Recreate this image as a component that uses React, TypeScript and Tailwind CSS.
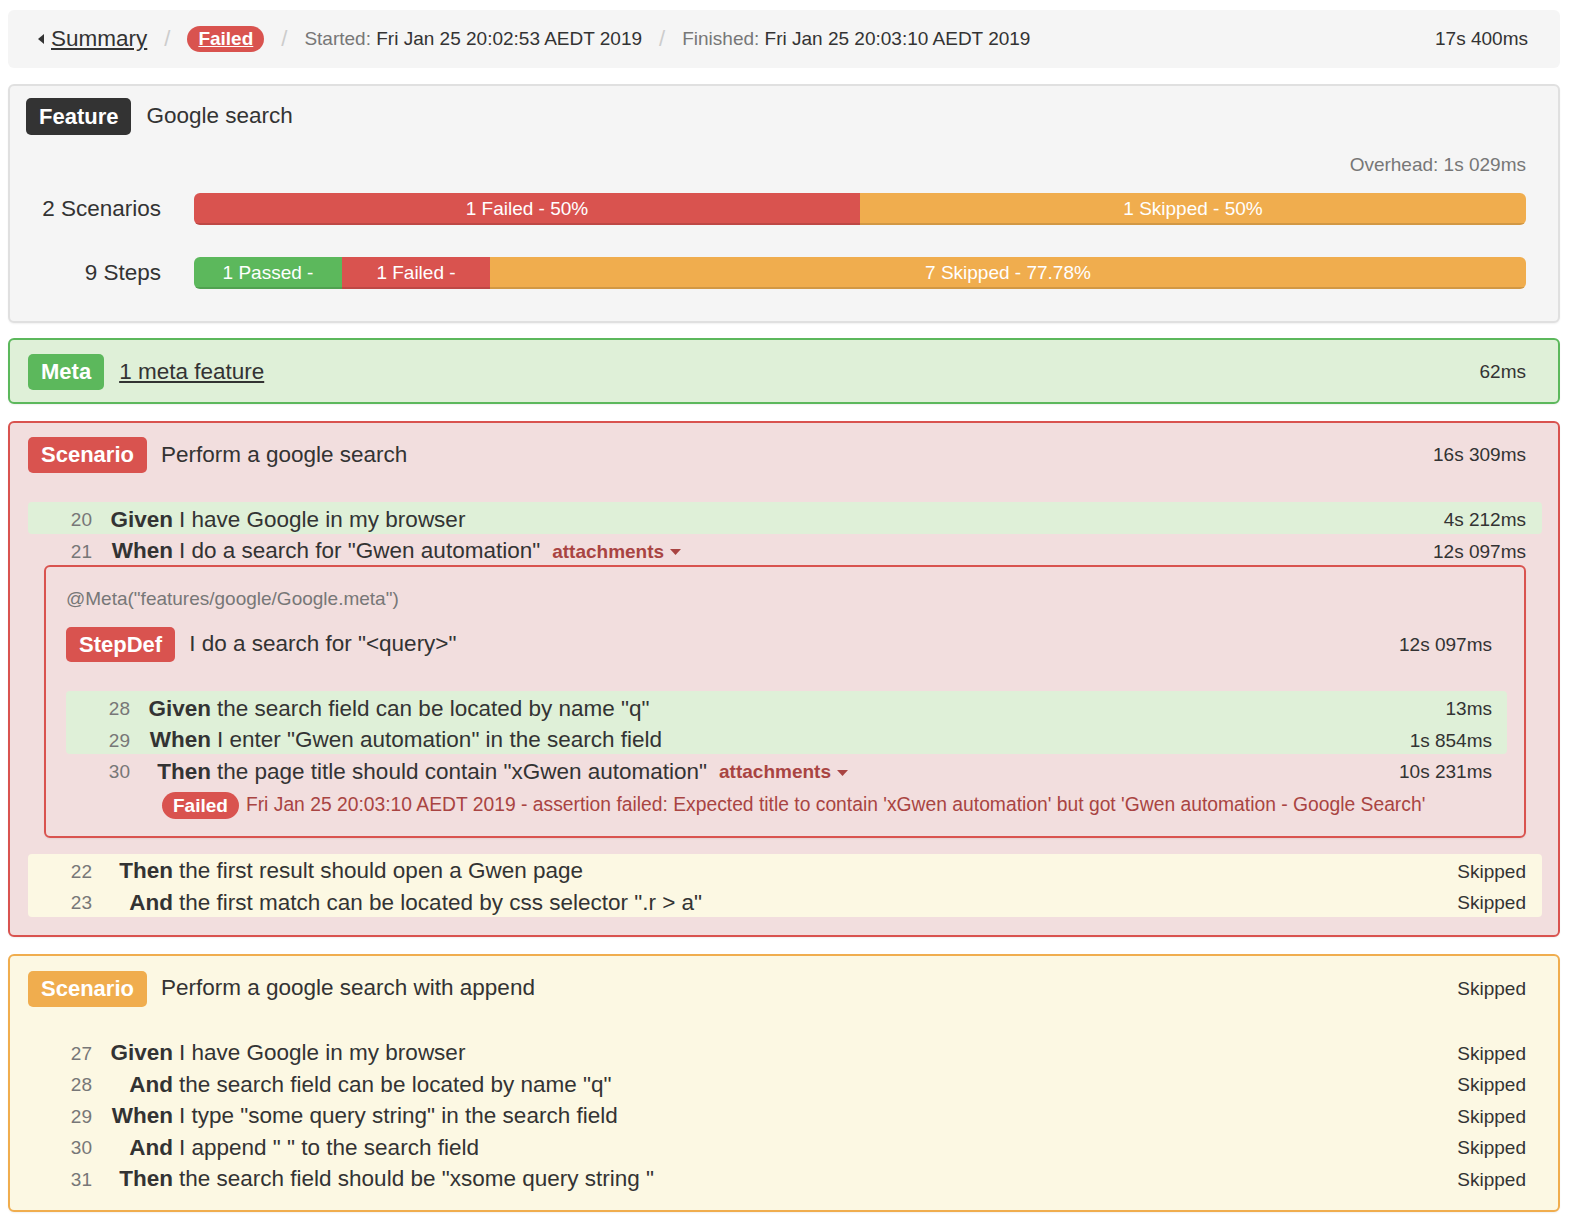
import React from "react";

function Caret({ className }: { className?: string }) {
  return (
    <svg width="11" height="6" viewBox="0 0 11 6" className={className}>
      <path d="M0 0h11L5.5 6z" fill="currentColor" />
    </svg>
  );
}

function Attachments() {
  return (
    <span className="ml-[12px] inline-flex items-center text-[19px] font-bold text-[#a94442]">
      attachments
      <Caret className="ml-[6px] mt-[2px]" />
    </span>
  );
}

type StepProps = { num: number; kw: string; text: string; dur: string; attach?: boolean };

function Step({ num, kw, text, dur, attach }: StepProps) {
  return (
    <div className="flex h-[31.5px] items-center pr-[16px] pt-[4px]">
      <span className="w-[64px] shrink-0 text-right text-[19px] text-[#777]">{num}</span>
      <span className="ml-[18px] w-[63px] shrink-0 text-right font-bold">{kw}</span>
      <span className="ml-[6px] whitespace-pre">{text}</span>
      {attach && <Attachments />}
      <span className="ml-auto text-[19px]">{dur}</span>
    </div>
  );
}

function Label({ children, className }: { children: React.ReactNode; className: string }) {
  return (
    <span className={`inline-flex shrink-0 items-center rounded-[5px] px-[13px] text-[22px] font-bold text-white ${className}`}>
      {children}
    </span>
  );
}

function Sep() {
  return <span className="mx-[17px] text-[22px] text-[#ccc]">/</span>;
}

export default function App() {
  return (
    <div className="bg-white pb-[12px] pl-[8px] pr-[12px] pt-[10px] text-[22.5px] leading-[1.42857] text-[#333] [font-family:'Liberation_Sans',Arial,Helvetica,sans-serif]">
      {/* Breadcrumb */}
      <div className="flex h-[58px] items-center rounded-[6px] bg-[#f5f5f5] pl-[30px] pr-[32px]">
        <svg width="6" height="10" viewBox="0 0 6 10" className="text-[#333]">
          <path d="M6 0v10L0 5z" fill="currentColor" />
        </svg>
        <a className="ml-[7px] text-[22.5px] underline">Summary</a>
        <Sep />
        <span className="h-[26px] rounded-full bg-[#d9534f] px-[11px] text-[19px] font-bold leading-[26px] text-white underline">
          Failed
        </span>
        <Sep />
        <span className="text-[19px]">
          <span className="text-[#777]">Started:</span> Fri Jan 25 20:02:53 AEDT 2019
        </span>
        <Sep />
        <span className="text-[19px]">
          <span className="text-[#777]">Finished:</span> Fri Jan 25 20:03:10 AEDT 2019
        </span>
        <span className="ml-auto text-[19px]">17s 400ms</span>
      </div>

      {/* Feature */}
      <div className="mt-[16px] rounded-[6px] border-2 border-[#e0e0e0] bg-[#f5f5f5] px-[16px] pb-[32px] pt-[12px] shadow-[0_1px_2px_rgba(0,0,0,0.06)]">
        <div className="flex items-center">
          <Label className="h-[37px] bg-[#333] px-[12px]">Feature</Label>
          <span className="ml-[15px]">Google search</span>
        </div>
        <div className="mt-[17px] pr-[16px] text-right text-[19px] leading-[26px] text-[#777]">Overhead: 1s 029ms</div>
        <div className="mt-[15px] flex items-center pr-[16px]">
          <span className="w-[135px] shrink-0 text-right leading-[32px]">2 Scenarios</span>
          <div className="ml-[33px] flex h-[32px] flex-1 overflow-hidden rounded-[6px] text-[19px] leading-[32px] text-white">
            <div className="w-1/2 bg-[#d9534f] text-center shadow-[inset_0_-2px_0_rgba(0,0,0,0.12)]">1 Failed - 50%</div>
            <div className="w-1/2 bg-[#f0ad4e] text-center shadow-[inset_0_-2px_0_rgba(0,0,0,0.12)]">1 Skipped - 50%</div>
          </div>
        </div>
        <div className="mt-[32px] flex items-center pr-[16px]">
          <span className="w-[135px] shrink-0 text-right leading-[32px]">9 Steps</span>
          <div className="ml-[33px] flex h-[32px] flex-1 overflow-hidden rounded-[6px] text-[19px] leading-[32px] text-white">
            <div className="w-[11.11%] overflow-hidden whitespace-nowrap bg-[#5cb85c] text-center shadow-[inset_0_-2px_0_rgba(0,0,0,0.12)]">1 Passed -</div>
            <div className="w-[11.11%] overflow-hidden whitespace-nowrap bg-[#d9534f] text-center shadow-[inset_0_-2px_0_rgba(0,0,0,0.12)]">1 Failed -</div>
            <div className="w-[77.78%] bg-[#f0ad4e] text-center shadow-[inset_0_-2px_0_rgba(0,0,0,0.12)]">7 Skipped - 77.78%</div>
          </div>
        </div>
      </div>

      {/* Meta */}
      <div className="mt-[15px] flex items-center rounded-[6px] border-2 border-[#5cb85c] bg-[#dff0d8] pb-[12px] pl-[18px] pr-[32px] pt-[14px] shadow-[0_1px_2px_rgba(0,0,0,0.06)]">
        <Label className="h-[36px] bg-[#5cb85c] px-[13px]">Meta</Label>
        <a className="ml-[15px] underline">1 meta feature</a>
        <span className="ml-auto text-[19px]">62ms</span>
      </div>

      {/* Scenario failed */}
      <div className="mt-[17px] rounded-[6px] border-2 border-[#d9534f] bg-[#f2dede] pb-[18px] pl-[18px] pr-[16px] pt-[14px] shadow-[0_1px_2px_rgba(0,0,0,0.06)]">
        <div className="flex items-center pr-[16px]">
          <Label className="h-[36px] bg-[#d9534f]">Scenario</Label>
          <span className="ml-[14px]">Perform a google search</span>
          <span className="ml-auto text-[19px]">16s 309ms</span>
        </div>
        <div className="mt-[29px] rounded-[4px] bg-[#dff0d8]">
          <Step num={20} kw="Given" text="I have Google in my browser" dur="4s 212ms" />
        </div>
        <Step num={21} kw="When" text={'I do a search for "Gwen automation"'} dur="12s 097ms" attach />
        <div className="mx-[16px] rounded-[6px] border-2 border-[#d9534f] pb-[17px] pl-[20px] pr-[17px] pt-[18px] shadow-[0_1px_2px_rgba(0,0,0,0.06)]">
          <div className="text-[19px] leading-[27px] text-[#777]">@Meta("features/google/Google.meta")</div>
          <div className="mt-[15px] flex items-center pr-[15px]">
            <Label className="h-[35px] bg-[#d9534f]">StepDef</Label>
            <span className="ml-[14px]">I do a search for "&lt;query&gt;"</span>
            <span className="ml-auto text-[19px]">12s 097ms</span>
          </div>
          <div className="mt-[29px] rounded-[4px] bg-[#dff0d8]">
            <div className="[&>div]:pr-[15px]">
              <Step num={28} kw="Given" text={'the search field can be located by name "q"'} dur="13ms" />
              <Step num={29} kw="When" text={'I enter "Gwen automation" in the search field'} dur="1s 854ms" />
            </div>
          </div>
          <div className="[&>div]:pr-[15px]">
            <Step num={30} kw="Then" text={'the page title should contain "xGwen automation"'} dur="10s 231ms" attach />
          </div>
          <div className="mt-[6px] flex h-[27px] items-center pl-[96px]">
            <span className="h-[27px] rounded-full bg-[#d9534f] px-[11px] text-[19px] font-bold leading-[27px] text-white">Failed</span>
            <span className="ml-[7px] text-[19.3px] text-[#a94442]">
              Fri Jan 25 20:03:10 AEDT 2019 - assertion failed: Expected title to contain 'xGwen automation' but got 'Gwen automation - Google Search'
            </span>
          </div>
        </div>
        <div className="mt-[16px] rounded-[4px] bg-[#fcf8e3]">
          <Step num={22} kw="Then" text="the first result should open a Gwen page" dur="Skipped" />
          <Step num={23} kw="And" text={'the first match can be located by css selector ".r > a"'} dur="Skipped" />
        </div>
      </div>

      {/* Scenario skipped */}
      <div className="mt-[17px] rounded-[6px] border-2 border-[#f0ad4e] bg-[#fcf8e3] pb-[17px] pl-[18px] pr-[16px] pt-[15px] shadow-[0_1px_2px_rgba(0,0,0,0.06)]">
        <div className="flex items-center pr-[16px]">
          <Label className="h-[36px] bg-[#f0ad4e]">Scenario</Label>
          <span className="ml-[14px]">Perform a google search with append</span>
          <span className="ml-auto text-[19px]">Skipped</span>
        </div>
        <div className="mt-[29px]">
          <Step num={27} kw="Given" text="I have Google in my browser" dur="Skipped" />
          <Step num={28} kw="And" text={'the search field can be located by name "q"'} dur="Skipped" />
          <Step num={29} kw="When" text={'I type "some query string" in the search field'} dur="Skipped" />
          <Step num={30} kw="And" text={'I append " " to the search field'} dur="Skipped" />
          <Step num={31} kw="Then" text={'the search field should be "xsome query string "'} dur="Skipped" />
        </div>
      </div>
    </div>
  );
}
